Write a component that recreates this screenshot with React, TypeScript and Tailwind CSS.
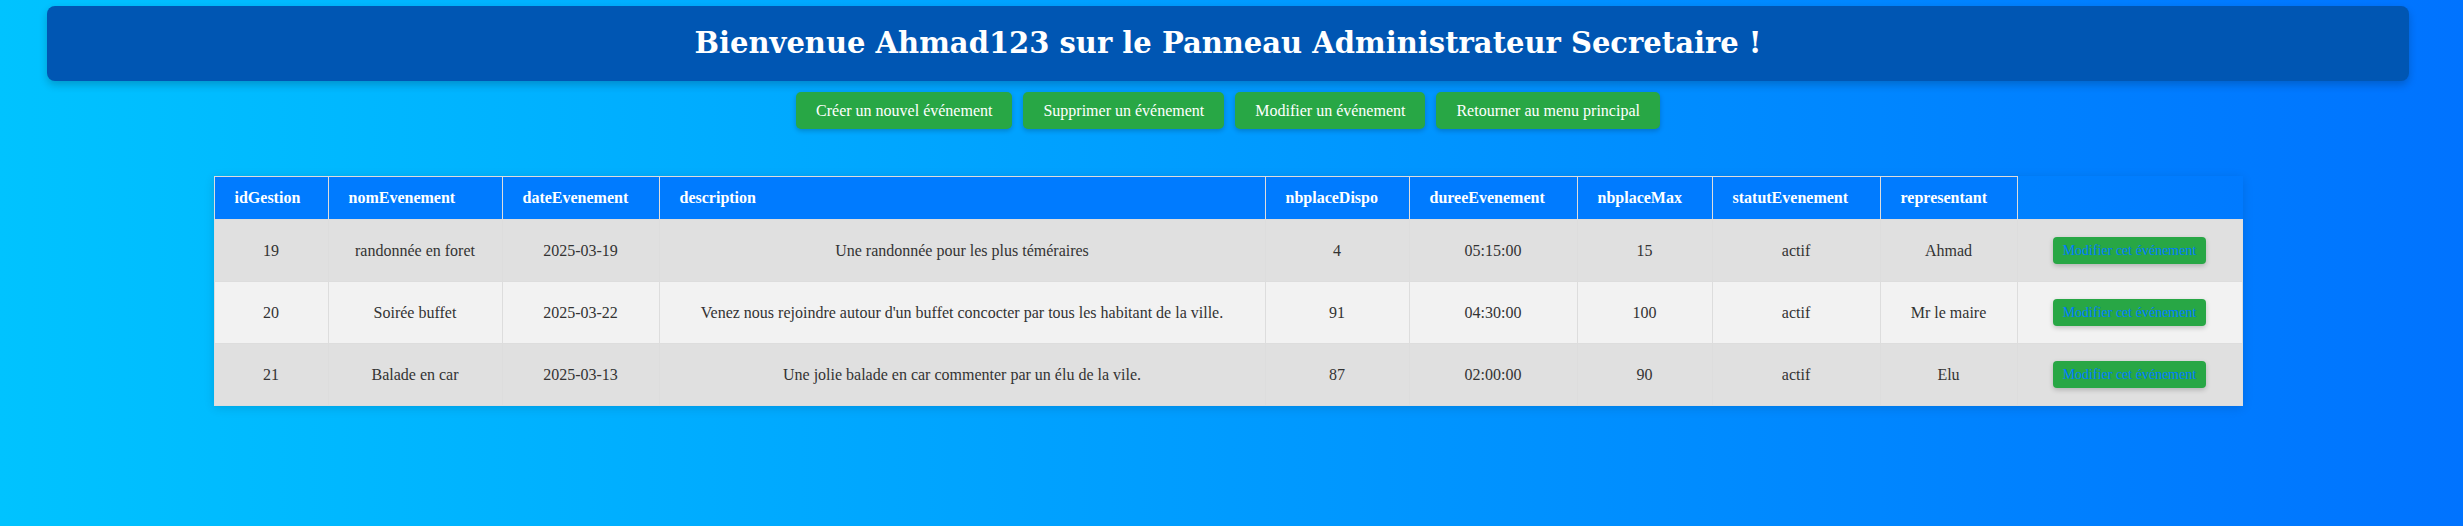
import React from "react";

type Evenement = {
  idGestion: number;
  nomEvenement: string;
  dateEvenement: string;
  description: string;
  nbplaceDispo: number;
  dureeEvenement: string;
  nbplaceMax: number;
  statutEvenement: string;
  representant: string;
};

const evenements: Evenement[] = [
  {
    idGestion: 19,
    nomEvenement: "randonnée en foret",
    dateEvenement: "2025-03-19",
    description: "Une randonnée pour les plus téméraires",
    nbplaceDispo: 4,
    dureeEvenement: "05:15:00",
    nbplaceMax: 15,
    statutEvenement: "actif",
    representant: "Ahmad",
  },
  {
    idGestion: 20,
    nomEvenement: "Soirée buffet",
    dateEvenement: "2025-03-22",
    description:
      "Venez nous rejoindre autour d'un buffet concocter par tous les habitant de la ville.",
    nbplaceDispo: 91,
    dureeEvenement: "04:30:00",
    nbplaceMax: 100,
    statutEvenement: "actif",
    representant: "Mr le maire",
  },
  {
    idGestion: 21,
    nomEvenement: "Balade en car",
    dateEvenement: "2025-03-13",
    description: "Une jolie balade en car commenter par un élu de la vile.",
    nbplaceDispo: 87,
    dureeEvenement: "02:00:00",
    nbplaceMax: 90,
    statutEvenement: "actif",
    representant: "Elu",
  },
];

const colonnes = [
  { label: "idGestion", w: "w-[114px]" },
  { label: "nomEvenement", w: "w-[174px]" },
  { label: "dateEvenement", w: "w-[157px]" },
  { label: "description", w: "w-[606px]" },
  { label: "nbplaceDispo", w: "w-[144px]" },
  { label: "dureeEvenement", w: "w-[168px]" },
  { label: "nbplaceMax", w: "w-[135px]" },
  { label: "statutEvenement", w: "w-[168px]" },
  { label: "representant", w: "w-[137px]" },
];

const actions = [
  "Créer un nouvel événement",
  "Supprimer un événement",
  "Modifier un événement",
  "Retourner au menu principal",
];

export default function App() {
  return (
    <div className="min-h-screen w-full bg-[linear-gradient(to_right,#00c3ff,#0073ff)] pt-[6px] pl-[47px] pr-[54px] font-['Liberation_Serif','Times_New_Roman',serif]">
      <header className="flex h-[75px] items-center justify-center rounded-lg bg-[#0056b3] shadow-[0_4px_8px_rgba(0,0,0,0.2)]">
        <h1 className="font-['DejaVu_Serif',Georgia,serif] text-[29px] font-bold leading-none text-white">
          Bienvenue Ahmad123 sur le Panneau Administrateur Secretaire !
        </h1>
      </header>

      <div className="mt-[11px] flex justify-center gap-[11px]">
        {actions.map((a) => (
          <button
            key={a}
            className="h-[37px] rounded-[5px] bg-[#28a745] px-5 text-base text-white shadow-[0_2px_5px_rgba(0,0,0,0.2)]"
          >
            {a}
          </button>
        ))}
      </div>

      <table className="mx-auto mt-[47px] w-[2028px] table-fixed border-collapse shadow-[0_2px_10px_rgba(0,0,0,0.12)]">
        <colgroup>
          {colonnes.map((c) => (
            <col key={c.label} className={c.w} />
          ))}
          <col className="w-[225px]" />
        </colgroup>
        <thead>
          <tr className="h-[43px]">
            {colonnes.map((c) => (
              <th
                key={c.label}
                className="border border-[#ddd] bg-[#007bff] pl-5 text-left text-base font-bold text-white"
              >
                {c.label}
              </th>
            ))}
          </tr>
        </thead>
        <tbody>
          {evenements.map((e, i) => (
            <tr
              key={e.idGestion}
              className={`h-[62px] text-base text-[#333] ${
                i % 2 === 1 ? "bg-[#f2f2f2]" : "bg-[#e0e0e0]"
              }`}
            >
              <td className="border border-[#ddd] text-center">{e.idGestion}</td>
              <td className="border border-[#ddd] text-center">{e.nomEvenement}</td>
              <td className="border border-[#ddd] text-center">{e.dateEvenement}</td>
              <td className="border border-[#ddd] text-center">{e.description}</td>
              <td className="border border-[#ddd] text-center">{e.nbplaceDispo}</td>
              <td className="border border-[#ddd] text-center">{e.dureeEvenement}</td>
              <td className="border border-[#ddd] text-center">{e.nbplaceMax}</td>
              <td className="border border-[#ddd] text-center">{e.statutEvenement}</td>
              <td className="border border-[#ddd] text-center">{e.representant}</td>
              <td className="border border-[#ddd] text-center">
                <button className="h-[27px] rounded bg-[#28a745] px-2.5 text-sm text-[#007bff] shadow-[0_2px_5px_rgba(0,0,0,0.2)]">
                  Modifier cet événement
                </button>
              </td>
            </tr>
          ))}
        </tbody>
      </table>
    </div>
  );
}
